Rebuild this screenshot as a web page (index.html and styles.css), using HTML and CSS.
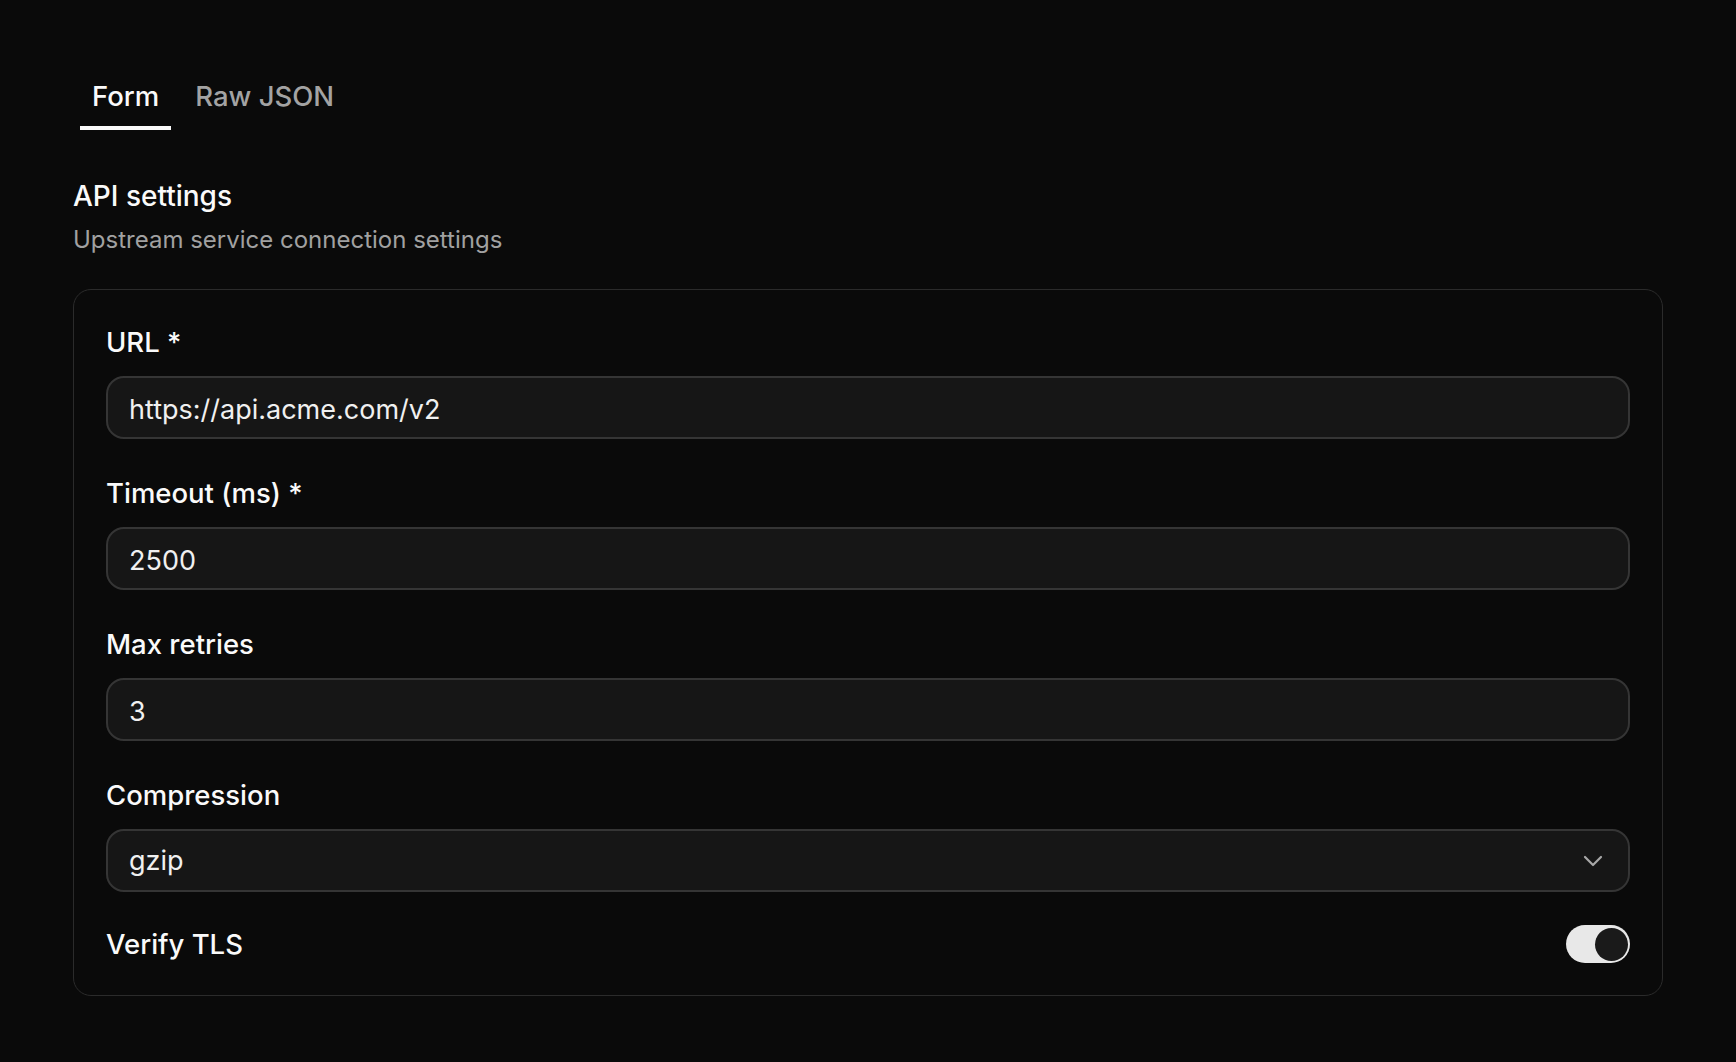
FILE: index.html
```html
<!DOCTYPE html>
<html lang="en">
<head>
<meta charset="utf-8">
<title>API settings</title>
<link rel="stylesheet" href="styles.css">
</head>
<body>
<main class="page">
  <nav class="tabs">
    <button class="tab tab-active">Form</button>
    <button class="tab">Raw JSON</button>
  </nav>

  <section class="section">
    <h2 class="section-title">API settings</h2>
    <p class="section-desc">Upstream service connection settings</p>

    <div class="card">
      <div class="field">
        <label class="label">URL *</label>
        <div class="input"><span class="value">https://api.acme.com/v2</span></div>
      </div>
      <div class="field">
        <label class="label">Timeout (ms) *</label>
        <div class="input"><span class="value">2500</span></div>
      </div>
      <div class="field">
        <label class="label">Max retries</label>
        <div class="input"><span class="value">3</span></div>
      </div>
      <div class="field">
        <label class="label">Compression</label>
        <div class="input select">
          <span class="value">gzip</span>
          <svg class="chevron" width="20" height="12" viewBox="0 0 20 12" fill="none">
            <path d="M2 2l8 8 8-8" stroke="currentColor" stroke-width="2.2" stroke-linecap="round" stroke-linejoin="round"/>
          </svg>
        </div>
      </div>
      <div class="switch-row">
        <span class="label">Verify TLS</span>
        <span class="switch"><span class="knob"></span></span>
      </div>
    </div>
  </section>
</main>
</body>
</html>
```

FILE: styles.css
```css
html, body {
  margin: 0;
  background: #0a0a0a;
}

body {
  font-family: Inter, "Noto Sans", "Liberation Sans", sans-serif;
  color: #f5f5f5;
}

.page {
  padding: 70px 73px 0 73px;
  width: 1590px;
}

.tabs {
  display: flex;
  gap: 12px;
  margin-left: 7px;
}

.tab {
  background: none;
  border: none;
  border-bottom: 4px solid transparent;
  padding: 8px 12px 12px;
  font-family: inherit;
  font-size: 27.5px;
  line-height: 36px;
  font-weight: 500;
  color: #a3a3a3;
  cursor: pointer;
}

.tab-active {
  color: #fafafa;
  border-bottom-color: #fafafa;
}

.section {
  margin-top: 48px;
}

.section-title {
  margin: 0;
  font-size: 28px;
  line-height: 36px;
  font-weight: 500;
  color: #fafafa;
}

.section-desc {
  margin: 10px 0 0;
  font-size: 24px;
  line-height: 32px;
  color: #a1a1a1;
}

.card {
  margin-top: 33px;
  border: 1px solid #2b2b2b;
  border-radius: 18px;
  padding: 32px 32px 31px;
  display: flex;
  flex-direction: column;
  gap: 34px;
}

.field {
  display: flex;
  flex-direction: column;
  gap: 14px;
}

.label {
  font-size: 27.5px;
  line-height: 40px;
  font-weight: 500;
  color: #fafafa;
}

.input {
  box-sizing: border-box;
  height: 63px;
  display: flex;
  align-items: center;
  padding: 0 21px;
  background: #161616;
  border: 2px solid #353535;
  border-radius: 18px;
  font-size: 27px;
  color: #f0f0f0;
}

.value {
  padding-top: 3px;
}

.select {
  justify-content: space-between;
  padding-right: 25px;
}

.select .value {
  padding-top: 0;
}

.chevron {
  color: #a8a8a8;
}

.switch-row {
  display: flex;
  align-items: center;
  justify-content: space-between;
  margin-top: -2px;
}

.switch {
  box-sizing: border-box;
  width: 64px;
  height: 38px;
  border-radius: 19px;
  background: #e8e8e8;
  display: flex;
  align-items: center;
  justify-content: flex-end;
  padding: 0 2px;
}

.knob {
  width: 33px;
  height: 33px;
  border-radius: 50%;
  background: #1a1a1a;
}
```
